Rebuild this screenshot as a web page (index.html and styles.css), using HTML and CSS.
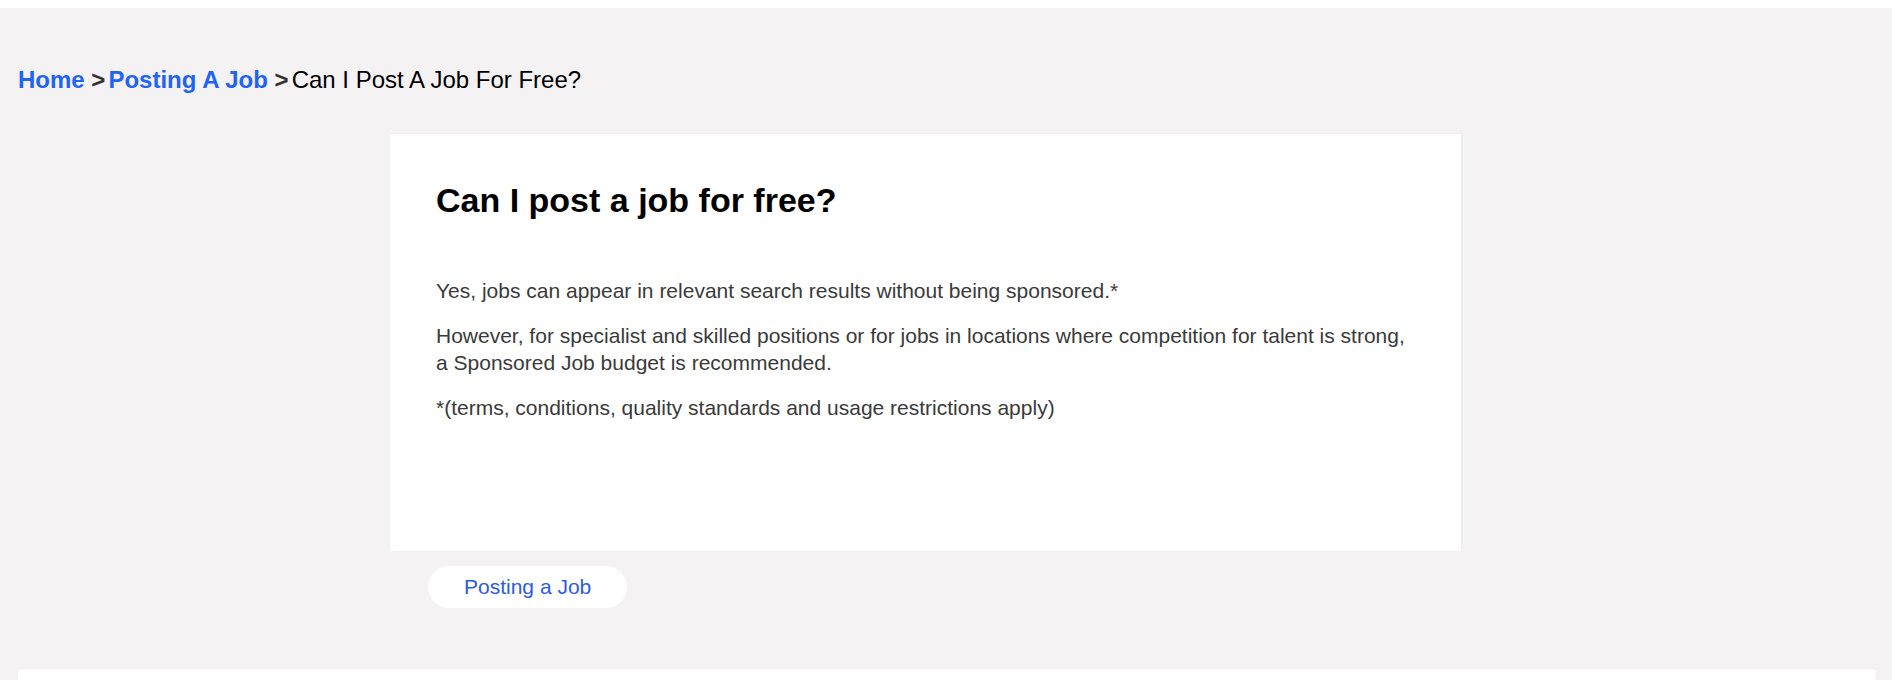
FILE: index.html
```html
<!DOCTYPE html>
<html lang="en">
<head>
    <meta charset="UTF-8">
    <meta name="viewport" content="width=device-width, initial-scale=1.0">
    <title>Can I post a job for free?</title>
    <link rel="stylesheet" href="styles.css">
</head>
<body>
    <div class="top-strip"></div>

    <main class="page">
        <nav class="breadcrumb">
            <a href="#">Home</a> <span class="sep">&gt;</span><a href="#">Posting A Job</a> <span class="sep">&gt;</span><span class="current">Can I Post A Job For Free?</span>
        </nav>

        <article class="article">
            <h1>Can I post a job for free?</h1>
            <div class="article-body">
                <p>Yes, jobs can appear in relevant search results without being sponsored.*</p>
                <p>However, for specialist and skilled positions or for jobs in locations where competition for talent is strong, a Sponsored Job budget is recommended.</p>
                <p>*(terms, conditions, quality standards and usage restrictions apply)</p>
            </div>
        </article>

        <div class="labels">
            <a href="#" class="label-pill">Posting a Job</a>
        </div>
    </main>

    <section class="related"></section>
</body>
</html>
```

FILE: styles.css
```css
body {
    font-family: "Liberation Sans", Arial, sans-serif;
    background-color: #f4f2f3;
    margin: 0;
    padding: 0;
}
.top-strip {
    height: 8px;
    background-color: #fff;
}
.page {
    padding: 58px 16px 0 18px;
}
.breadcrumb {
    font-size: 24px;
    line-height: 28px;
    color: #000;
}
.breadcrumb a {
    color: #2164f3;
    font-weight: bold;
    text-decoration: none;
}
.breadcrumb .sep {
    margin-right: 3px;
    font-weight: bold;
    color: #333;
}
.article {
    margin: 40px 0 0 372px;
    width: 1071px;
    box-sizing: border-box;
    padding: 46px 46px 130px;
    background-color: #fff;
    box-shadow: 1px 0 2px rgba(0, 0, 0, 0.04);
}
.article h1 {
    margin: 0 0 57px;
    font-size: 34px;
    line-height: 40px;
    color: #000;
}
.article-body p {
    margin: 0 0 18px;
    font-size: 21px;
    line-height: 27px;
    color: #3a3a3a;
}
.article-body p:last-child {
    margin-bottom: 0;
}
.labels {
    margin: 15px 0 0 410px;
}
.label-pill {
    display: inline-block;
    height: 42px;
    padding: 0 36px;
    border-radius: 21px;
    background-color: #fff;
    color: #2d5be3;
    font-size: 21px;
    line-height: 42px;
    text-decoration: none;
}
.related {
    margin: 61px 16px 0 18px;
    height: 60px;
    background-color: #fff;
    border-radius: 4px 4px 0 0;
    box-shadow: 0 -1px 2px rgba(0, 0, 0, 0.03);
}
```
